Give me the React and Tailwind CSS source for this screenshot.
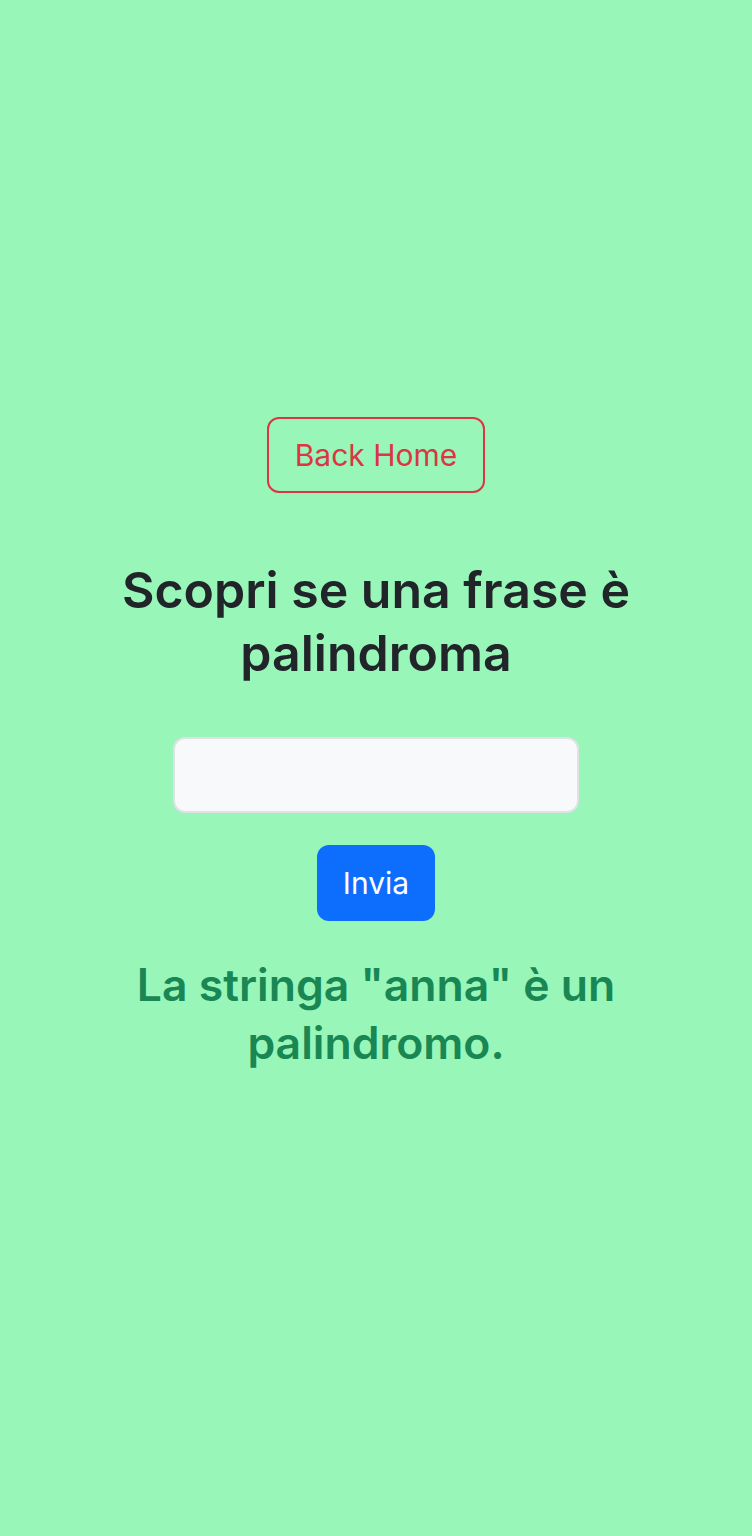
import React, { useState } from "react";

const App = () => {
  const [text, setText] = useState("");

  return (
    <div
      className="w-full min-h-screen bg-[#98f6b8] flex flex-col items-center pt-[417px] px-6"
      style={{ fontFamily: "Inter, 'Noto Sans', sans-serif" }}
    >
      <button className="h-[76px] w-[218px] rounded-[12px] border-2 border-[#dc3545] text-[#dc3545] text-[30px]">
        Back Home
      </button>

      <h1 className="mt-[66px] text-center text-[50px] leading-[63px] font-semibold text-[#212529] max-w-[560px]">
        Scopri se una frase è palindroma
      </h1>

      <input
        type="text"
        value={text}
        onChange={(e) => setText(e.target.value)}
        className="mt-[52px] h-[76px] w-[406px] rounded-[12px] border-2 border-[#dee2e6] bg-[#f8f9fa] px-4 text-[30px] outline-none"
      />

      <button className="mt-[32px] h-[76px] w-[118px] rounded-[12px] bg-[#0d6efd] text-white text-[30px]">
        Invia
      </button>

      <h2 className="mt-[35px] text-center text-[44.5px] leading-[58px] font-semibold text-[#198754] max-w-[520px]">
        La stringa "anna" è un palindromo.
      </h2>
    </div>
  );
};

export default App;
